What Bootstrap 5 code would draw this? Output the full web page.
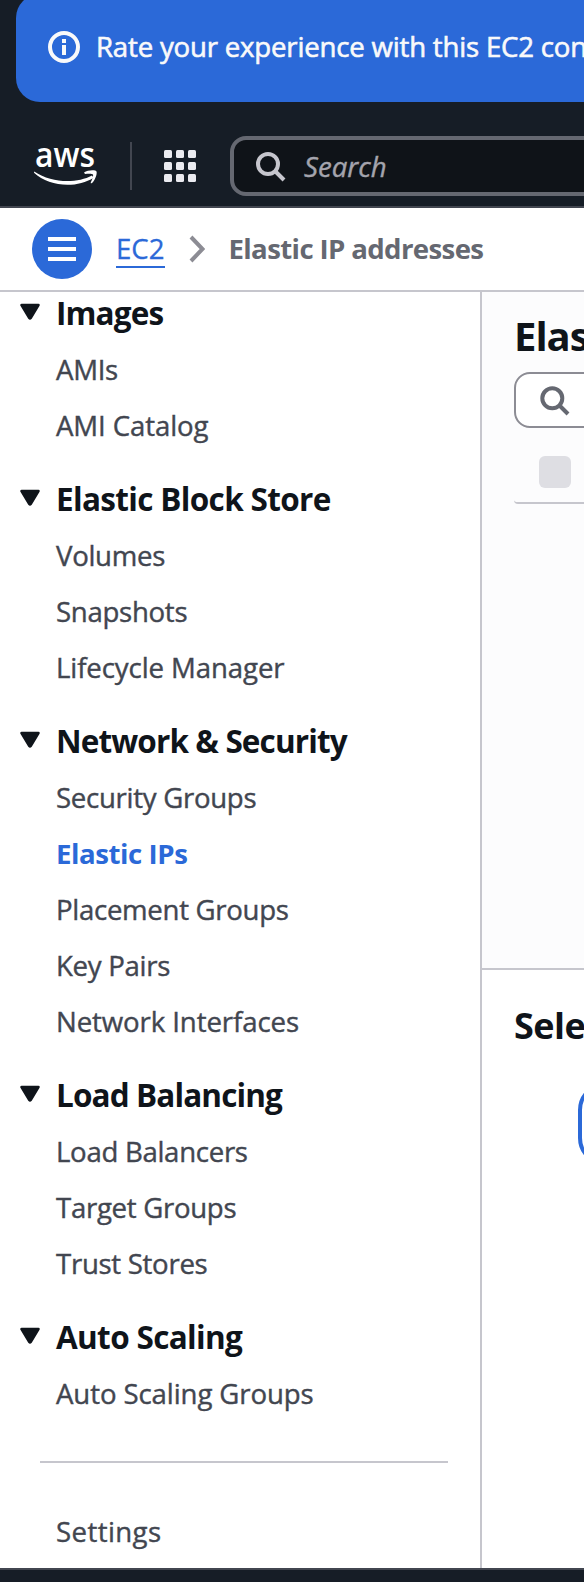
<!DOCTYPE html>
<html lang="en">
<head>
<meta charset="utf-8">
<meta name="viewport" content="width=device-width, initial-scale=1">
<title>Elastic IP addresses | EC2</title>
<link href="https://cdn.jsdelivr.net/npm/bootstrap@5.3.0/dist/css/bootstrap.min.css" rel="stylesheet">
<style>
  body { font-family: "Open Sans", "Noto Sans", sans-serif; font-size: 27.6px; line-height: 1.4; background: #161d26; height: 1582px; overflow: hidden; color: #0f141a; }
  svg { display: block; flex: none; }
  .flash { height: 108px; margin: -6px 0 0 16px; padding: 0 0 2px 32px; gap: 16px; border-radius: 24px 0 0 24px; background: #2b69d8; color: #f9f9fa; letter-spacing: -.19px; -webkit-text-stroke: .6px; overflow: hidden; }
  .flash span { margin-top: -2px; }
  .flash svg { margin-top: -1px; }
  .topnav { height: 106px; padding: 24px 0 0 34px; border-bottom: 2px solid #424650; overflow: hidden; }
  .rule { width: 2px; height: 48px; margin: 0 32px; background: #424650; }
  .find { width: 420px; height: 60px; margin-left: 34px; padding-left: 20px; gap: 18px; border: 4px solid #656871; border-radius: 16px; background: #0f1318; color: #a4a4ad; font-style: italic; -webkit-text-stroke: .4px; }
  .crumbs { height: 84px; padding-left: 32px; border-bottom: 2px solid #c6c6cd; color: #656871; }
  .menu-btn { width: 60px; height: 60px; background: #2b69d8; }
  .crumbs a { margin: 0 24px 0 24px; height: 38px; line-height: 36px; color: #2b69d8; text-decoration: none; border-bottom: 2px solid #2b69d8; -webkit-text-stroke: .3px; }
  .here { margin: -2px 0 0 24px; letter-spacing: -.63px; }
  .main-area { height: 1276px; }
  .side { width: 482px; border-right: 2px solid #c6c6cd; }
  .side h2 { height: 40px; margin: 0 0 8.5px; padding: 1px 0 0 20px; gap: 16px; font-size: 31.5px; line-height: 40px; font-weight: 700; letter-spacing: -.66px; }
  .side h2.tight { letter-spacing: -.88px; }
  .caret { margin-top: -1px; }
  .side ul { margin: 0 0 25.5px; }
  .side li { height: 56px; padding-left: 56px; line-height: 56px; color: #424650; letter-spacing: -.3px; -webkit-text-stroke: .4px; }
  .side li.wide { letter-spacing: -.1px; }
  .side li.wider { letter-spacing: .4px; }
  .side li.active { color: #2b69d8; font-weight: 700; letter-spacing: -.43px; -webkit-text-stroke: 0; }
  .side hr { width: 408px; height: 2px; margin: 40.5px 0 40px 40px; border: 0; background: #c6c6cd; opacity: 1; }
  .list-pane { height: 678px; padding: 24px 0 0 32px; background: #fcfcfd; border-bottom: 2px solid #c6c6cd; }
  .list-pane h1 { height: 56px; margin: 0; font-size: 40px; line-height: 40px; font-weight: 700; letter-spacing: -1px; }
  .filter { width: 200px; height: 56px; padding: 3px 0 0 24px; border: 2px solid #8c8c94; border-radius: 16px; }
  .thead-row { width: 200px; height: 76px; padding: 28px 0 0 25px; border-bottom: 2px solid #c6c6cd; border-bottom-left-radius: 4px; }
  .tick { width: 32px; height: 32px; border-radius: 6px; background: #dedee3; }
  .detail h2 { margin: 32px 0 0 32px; font-size: 36px; line-height: 48px; font-weight: 700; letter-spacing: -.5px; }
  .pill { width: 300px; height: 84px; margin: 32px 0 0 96px; border: 4px solid #2b69d8; border-radius: 28px; }
  .foot { height: 14px; border-top: 2px solid #424650; }
</style>
</head>
<body>
<div class="flash d-flex align-items-center">
  <svg width="32" height="32" viewBox="0 0 32 32" fill="none" stroke="#f9f9fa" stroke-width="4"><circle cx="16" cy="16" r="14"/><path d="M16 14v10M16 8v4"/></svg>
  <span class="text-nowrap">Rate your experience with this EC2 console</span>
</div>

<nav class="topnav d-flex align-items-center">
  <svg width="64" height="48" viewBox="0 0 64 48"><text x="1" y="24.500" font-size="34.500" font-weight="600" textLength="60" lengthAdjust="spacingAndGlyphs" fill="#fff">aws</text><path d="M.2 29.500C18 41.500 43 41.500 58 33.500l1.500 2.200C43 46.500 15 45 0 30.800z" fill="#fff"/><path d="M50 30.500C54 27.700 62 27.700 62.600 29.700 63.200 32 61 38.500 58 41 57 41.700 56.300 41.300 57 40 58.500 36.500 59.500 33.500 59 32.500 58 31.300 54 31.700 51 32z" fill="#fff"/></svg>
  <div class="rule flex-shrink-0"></div>
  <svg width="32" height="32" viewBox="0 0 32 32" fill="#ebebf0"><g id="r"><rect width="8" height="8" rx="1.500"/><rect x="12" width="8" height="8" rx="1.500"/><rect x="24" width="8" height="8" rx="1.500"/></g><use href="#r" y="12"/><use href="#r" y="24"/></svg>
  <div class="find d-flex align-items-center flex-shrink-0">
    <svg width="32" height="32" viewBox="0 0 32 32" fill="none" stroke="#c6c6cd" stroke-width="4"><circle cx="14" cy="14" r="10"/><path d="M21 21l9 9"/></svg>
    <span>Search</span>
  </div>
</nav>

<div class="crumbs d-flex align-items-center bg-white">
  <div class="menu-btn rounded-circle d-flex align-items-center justify-content-center"><svg width="28" height="24" stroke="#fff" stroke-width="4"><path d="M0 2h28M0 12h28M0 22h28"/></svg></div>
  <a href="#">EC2</a>
  <svg width="16" height="28" viewBox="0 0 16 28" fill="none" stroke="#8c8c94" stroke-width="4"><path d="M2 2l11.500 12L2 26"/></svg>
  <b class="here text-nowrap">Elastic IP addresses</b>
</div>

<div class="main-area d-flex bg-white overflow-hidden">
  <aside class="side flex-shrink-0">
    <h2 class="d-flex tight"><svg class="caret" width="20" height="40" viewBox="0 0 20 40"><path d="M1.500 13h17L10.700 26q-.7 1-1.400 0z" fill="#0f141a" stroke="#0f141a" stroke-width="2.500" stroke-linejoin="round"/></svg>Images</h2>
    <ul class="list-unstyled"><li>AMIs</li><li class="wide">AMI Catalog</li></ul>
    <h2 class="d-flex"><svg class="caret" width="20" height="40" viewBox="0 0 20 40"><path d="M1.500 13h17L10.700 26q-.7 1-1.400 0z" fill="#0f141a" stroke="#0f141a" stroke-width="2.500" stroke-linejoin="round"/></svg>Elastic Block Store</h2>
    <ul class="list-unstyled"><li>Volumes</li><li>Snapshots</li><li class="wide">Lifecycle Manager</li></ul>
    <h2 class="d-flex tight"><svg class="caret" width="20" height="40" viewBox="0 0 20 40"><path d="M1.500 13h17L10.700 26q-.7 1-1.400 0z" fill="#0f141a" stroke="#0f141a" stroke-width="2.500" stroke-linejoin="round"/></svg>Network &amp; Security</h2>
    <ul class="list-unstyled"><li>Security Groups</li><li class="active">Elastic IPs</li><li>Placement Groups</li><li>Key Pairs</li><li class="wide">Network Interfaces</li></ul>
    <h2 class="d-flex tight"><svg class="caret" width="20" height="40" viewBox="0 0 20 40"><path d="M1.500 13h17L10.700 26q-.7 1-1.400 0z" fill="#0f141a" stroke="#0f141a" stroke-width="2.500" stroke-linejoin="round"/></svg>Load Balancing</h2>
    <ul class="list-unstyled"><li>Load Balancers</li><li>Target Groups</li><li>Trust Stores</li></ul>
    <h2 class="d-flex"><svg class="caret" width="20" height="40" viewBox="0 0 20 40"><path d="M1.500 13h17L10.700 26q-.7 1-1.400 0z" fill="#0f141a" stroke="#0f141a" stroke-width="2.500" stroke-linejoin="round"/></svg>Auto Scaling</h2>
    <ul class="list-unstyled"><li class="wide">Auto Scaling Groups</li></ul>
    <hr>
    <ul class="list-unstyled"><li class="wider">Settings</li></ul>
  </aside>
  <main class="flex-grow-1 overflow-hidden">
    <section class="list-pane">
      <h1 class="text-nowrap">Elastic IP addresses</h1>
      <div class="filter d-flex align-items-center bg-white"><svg width="32" height="32" viewBox="0 0 32 32" fill="none" stroke="#656871" stroke-width="4"><circle cx="12.300" cy="12.300" r="10"/><path d="M19.500 19.500l8.500 8.500"/></svg></div>
      <div class="thead-row"><div class="tick"></div></div>
    </section>
    <section class="detail">
      <h2 class="text-nowrap">Select an elastic IP address</h2>
      <div class="pill"></div>
    </section>
  </main>
</div>
<footer class="foot"></footer>
<script src="https://cdn.jsdelivr.net/npm/bootstrap@5.3.0/dist/js/bootstrap.bundle.min.js"></script>
</body>
</html>
